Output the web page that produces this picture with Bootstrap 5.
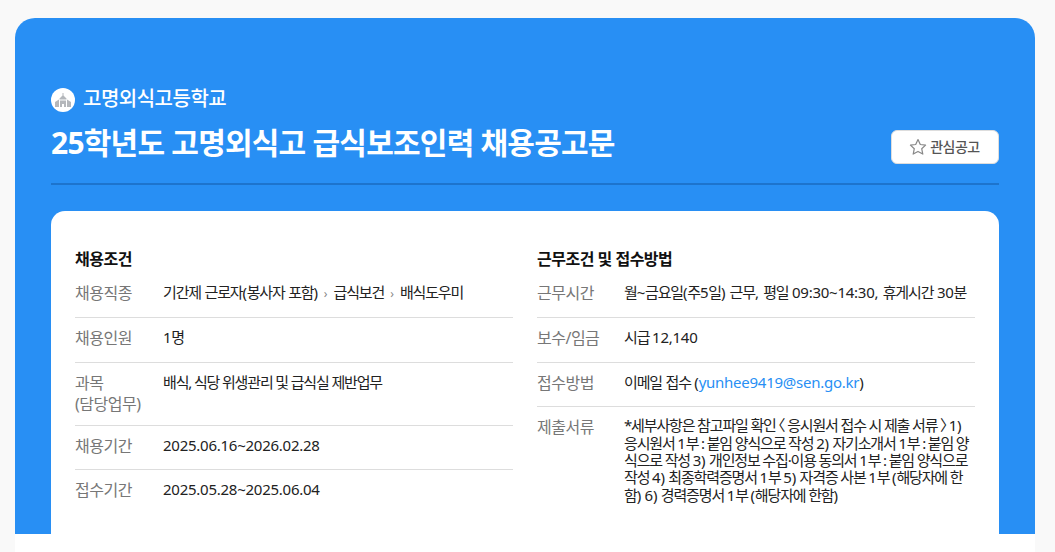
<!DOCTYPE html>
<html lang="ko">
<head>
<meta charset="utf-8">
<title>채용공고</title>
<link href="https://cdn.jsdelivr.net/npm/bootstrap@5.3.0/dist/css/bootstrap.min.css" rel="stylesheet">
<style>
html,body{height:552px;overflow:hidden}
body{background:#f9f9f9;font-family:"Noto Sans","Noto Sans CJK KR",sans-serif;color:#222;letter-spacing:-.5px}
.page-wrap{margin:18px 20px 0 15px;background:#fff;border-radius:20px 20px 0 0;height:534px}
.hero{background:#288ff4;border-radius:20px 20px 0 0;height:516px;padding:70px 36px 0;overflow:hidden}
.school-icon{width:24px;height:24px;background:#fff}
.school-name{font-size:20px;line-height:24px;color:#fff;font-weight:500;margin-top:-3px}
.post-title{font-size:30px;line-height:42px;font-weight:700;color:#fff;letter-spacing:-.77px}
.head-row{padding-bottom:19px;border-bottom:2px solid #1d74cd;margin-top:10px}
.fav-btn{width:108px;height:34px;font-size:14px;line-height:20px;color:#555;background:#fff;border:1px solid #ddd;border-radius:6px;padding:0 1px 0 0;letter-spacing:-.5px;font-weight:500;gap:3px}
.body-card{background:#fff;border-radius:14px;margin-top:26px;padding:37px 24px 0;height:400px}
.info-title{font-size:16px;line-height:22px;font-weight:700;color:#111;margin:0 0 3px}
.info-row{display:flex;border-bottom:1px solid #ddd;padding:10px 0;min-height:44.75px}
.info-row:last-child{border-bottom:0}
.info-label{flex:0 0 88px;font-size:16px;line-height:21px;color:#777}
.info-value{font-size:15px;line-height:21px;color:#222;flex:1;min-width:0;letter-spacing:-1.15px;word-break:break-all;margin-top:-1px}
.col-6 + .col-6 .info-value{margin-left:-1px}
.info-value a{color:#288ff4;text-decoration:none}
.lat-run{letter-spacing:-.25px}
.crumb-sep{color:#888;font-size:12px;margin:0 6px;letter-spacing:0}
.wide-gap{word-spacing:.8px}
.tight{line-height:17.4px;margin-top:0}
.ang-open{margin-left:-8px}
.ang-close{margin-right:-8px}
</style>
</head>
<body>
<div class="page-wrap">
  <div class="hero">
    <div class="d-flex align-items-center gap-2">
      <span class="school-icon rounded-circle d-flex align-items-center justify-content-center">
        <svg width="18" height="14" viewBox="0 0 18 14" fill="#b4b7bb"><path d="M8.500 0h1v2.500L12.500 5.500V6.500h-7V5.500l3-3z"/><path d="M5 6.500L1 9v5h4zM13 6.500L17 9v5h-4z"/><path d="M6 7.500h6V14h-2v-3H8v3H6z"/></svg>
      </span>
      <span class="school-name">고명외식고등학교</span>
    </div>
    <div class="head-row d-flex justify-content-between align-items-end">
      <div class="post-title">25학년도 고명외식고 급식보조인력 채용공고문</div>
      <button type="button" class="fav-btn btn d-flex align-items-center justify-content-center">
        <svg width="18" height="18" viewBox="0 0 18 18" fill="none" stroke="#888" stroke-width="1.200" stroke-linejoin="round"><path d="M9 1.500l2.300 5 5.300.6-3.900 3.600 1.100 5.400L9 13.400l-4.800 2.700 1.100-5.400L1.400 7.100l5.300-.6z"/></svg>
        <span>관심공고</span>
      </button>
    </div>
    <div class="body-card">
      <div class="row gx-4">
        <div class="col-6">
          <h3 class="info-title">채용조건</h3>
          <div class="info-row"><div class="info-label">채용직종</div><div class="info-value wide-gap">기간제 근로자<span class="lat-run">(</span>봉사자 포함<span class="lat-run">)</span><span class="crumb-sep">›</span>급식보건<span class="crumb-sep">›</span>배식도우미</div></div>
          <div class="info-row"><div class="info-label">채용인원</div><div class="info-value"><span class="lat-run">1</span>명</div></div>
          <div class="info-row"><div class="info-label">과목<br>(담당업무)</div><div class="info-value">배식, 식당 위생관리 및 급식실 제반업무</div></div>
          <div class="info-row"><div class="info-label">채용기간</div><div class="info-value"><span class="lat-run">2025.06.16~2026.02.28</span></div></div>
          <div class="info-row"><div class="info-label">접수기간</div><div class="info-value"><span class="lat-run">2025.05.28~2025.06.04</span></div></div>
        </div>
        <div class="col-6">
          <h3 class="info-title">근무조건 및 접수방법</h3>
          <div class="info-row"><div class="info-label">근무시간</div><div class="info-value wide-gap">월<span class="lat-run">~</span>금요일<span class="lat-run">(</span>주<span class="lat-run">5</span>일<span class="lat-run">) </span>근무<span class="lat-run">, </span>평일 <span class="lat-run">09:30~14:30, </span>휴게시간 <span class="lat-run">30</span>분</div></div>
          <div class="info-row"><div class="info-label">보수/임금</div><div class="info-value">시급 <span class="lat-run">12,140</span></div></div>
          <div class="info-row"><div class="info-label">접수방법</div><div class="info-value wide-gap">이메일 접수 <span class="lat-run">(</span><a href="#" class="lat-run">yunhee9419@sen.go.kr</a><span class="lat-run">)</span></div></div>
          <div class="info-row"><div class="info-label">제출서류</div><div class="info-value tight">*세부사항은 참고파일 확인 <span class="ang-open">〈</span> 응시원서 접수 시 제출 서류 <span class="ang-close">〉</span> <span class="lat-run">1)</span><br>응시원서 <span class="lat-run">1</span>부 : 붙임 양식으로 작성 <span class="lat-run">2) </span>자기소개서 <span class="lat-run">1</span>부 : 붙임 양식으로 작성 <span class="lat-run">3) </span>개인정보 수집·이용 동의서 <span class="lat-run">1</span>부 : 붙임 양식으로 작성 <span class="lat-run">4) </span>최종학력증명서 <span class="lat-run">1</span>부 <span class="lat-run">5) </span>자격증 사본 <span class="lat-run">1</span>부 <span class="lat-run">(</span>해당자에 한함<span class="lat-run">) 6) </span>경력증명서 <span class="lat-run">1</span>부 <span class="lat-run">(</span>해당자에 한함<span class="lat-run">)</span></div></div>
        </div>
      </div>
    </div>
  </div>
</div>
</body>
</html>
